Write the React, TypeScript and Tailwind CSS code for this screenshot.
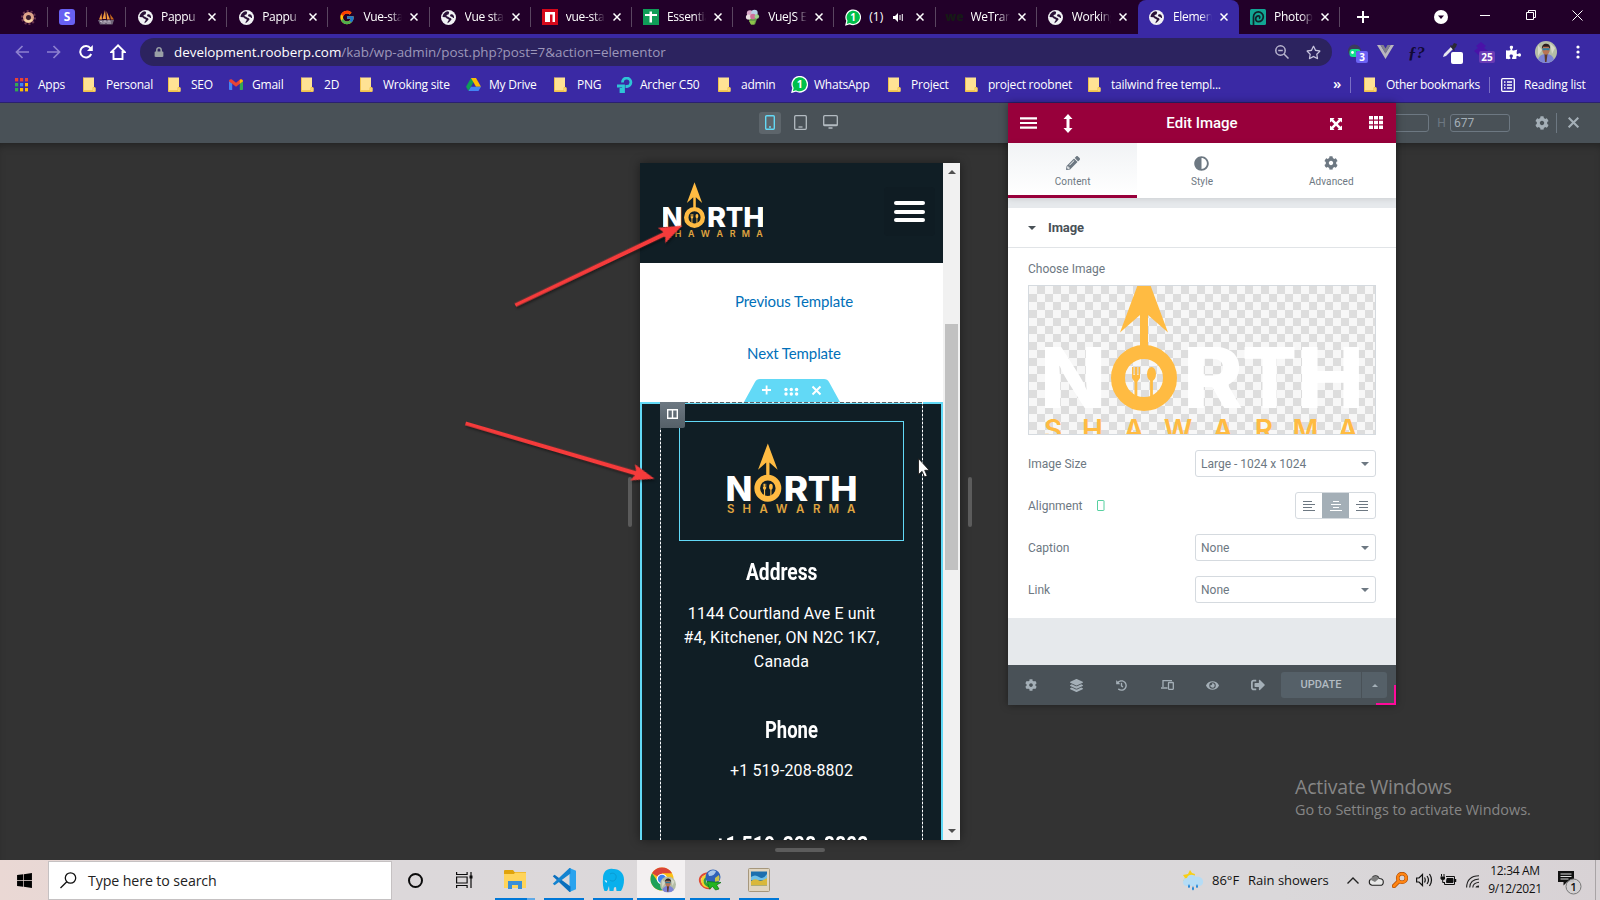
import type { ReactNode } from 'react';
import {
  FaAdjust,
  FaCog,
  FaEye,
  FaHistory,
  FaLayerGroup,
  FaLock,
  FaPencilAlt,
  FaPuzzlePiece,
  FaRegStar,
  FaSignOutAlt,
  FaWindows,
} from 'react-icons/fa';
import { FcGoogle } from 'react-icons/fc';

/* ---------- favicons and small browser icons ---------- */

function Globe() {
  return (
    <svg width="15" height="15" viewBox="0 0 15 15">
      <circle cx="7.5" cy="7.5" r="7.5" fill="#f1f1f4" />
      <path d="M7 1.2C4 1.5 1.6 4 1.6 7l2.6.3c1 .2 1.2 1.2 2.2 1.4 1 .2 1.6.6 1.3 1.5-.3.8-1.1 1-1.2 2.6l.3.5c.5-.9 1.7-1.200 2.200-2 .4-.8 1.600-1 1.500-2C10.400 8 8.800 8 7.800 7.200 7 6.500 5.600 6.400 5.500 5.700c0-.8 1.100-.8 1.800-1.100.7-.3.300-1 .7-1.500.3-.4.2-1.200-1-1.900z" fill="#2a1138" />
      <path d="M10 4.300c.8-.4 1.700 0 2.300.6.6 1 .9 2 .7 3.100-.9.200-1.200-.6-1.800-1-.8-.5-2-.3-2.100-1.300-.1-.7.300-1.100.9-1.400z" fill="#2a1138" />
    </svg>
  );
}

function Donut() {
  return (
    <svg width="15" height="15" viewBox="0 0 15 15">
      <circle cx="7.500" cy="7.500" r="6.500" fill="none" stroke="#6b3550" strokeWidth="2" strokeDasharray="2 2" />
      <circle cx="7.500" cy="7.500" r="4" fill="#3a2030" stroke="#dfa58a" strokeWidth="3" />
      <path d="M4 9.500a4.100 4.100 0 0 0 7 0" fill="none" stroke="#f6d8a8" strokeWidth="2" />
    </svg>
  );
}

function Boat() {
  return (
    <svg width="17" height="16" viewBox="0 0 17 16">
      <path d="M7 1 4.500 10H8zM3.500 4 1 10.500h3zM8.500 2 9 10.500h3z" fill="#f39a3d" />
      <path d="M12 5l.8 5.500H16z" fill="#c96a1c" />
      <path d="M0 11h16l-1.500 4.500H2z" fill="#6f6478" />
      <path d="M2 12.500h2v2M6 15v-3h2v2M10 15v-3h2v3" stroke="#d4ccd8" fill="none" strokeWidth=".8" />
    </svg>
  );
}

function WaBubble() {
  return (
    <svg width="17" height="17" viewBox="0 0 17 17" fontFamily="Open Sans, sans-serif">
      <path d="M1 16.200 2 12A7.700 7.700 0 1 1 5 15z" fill="#00c04b" stroke="#fff" strokeWidth="1.300" />
      <text x="8.700" y="12.300" textAnchor="middle" fontSize="10.500" fontWeight="700" fill="#fff">1</text>
    </svg>
  );
}

function Npm() {
  return (
    <svg width="16" height="16" viewBox="0 0 16 16">
      <path fill="#d5081b" d="M0 0h16v16H0z" />
      <path fill="#fff" d="M3 3h10v10h-2.500V5.500H8V13H3z" />
    </svg>
  );
}

function Sheet() {
  return (
    <svg width="16" height="16" viewBox="0 0 16 16">
      <path fill="#0f9d58" d="M0 0h16v16H0z" />
      <path fill="#fff" d="M2 5h4.500V2.500H9V5h5v2H9v6.500H6.500V7H2z" />
    </svg>
  );
}

function Bouquet() {
  return (
    <svg width="15" height="16" viewBox="0 0 15 16">
      <path d="M2 7h11l-3 8.500H6z" fill="#6ba04b" />
      <circle cx="5" cy="4.500" r="3.200" fill="#d8a7c8" />
      <circle cx="9.500" cy="4" r="3.200" fill="#b9cfe8" />
      <circle cx="3.500" cy="8" r="2.600" fill="#e9dfe2" />
      <circle cx="8" cy="7.500" r="2.800" fill="#cf6f9a" />
      <circle cx="11.800" cy="7.500" r="2.300" fill="#9fd18b" />
      <path d="M4 12h6l-1 3.500H6z" fill="#8cc24a" />
    </svg>
  );
}

function Photopea() {
  return (
    <svg width="16" height="16" viewBox="0 0 16 16">
      <rect width="16" height="16" rx="1.500" fill="#12a594" />
      <path d="M3.500 16V8a4.900 4.900 0 1 1 4.800 4.700c-1.600 0-2.600-1.200-2.600-2.700C5.700 8 7 6.700 8.600 6.800c1.300.1 1.700 1.900.4 2.700" fill="none" stroke="#10222a" strokeWidth="1.700" />
    </svg>
  );
}

function Close({ size = 8 }: { size?: number }) {
  return (
    <svg width={size} height={size} viewBox="0 0 8 8" stroke="currentColor" strokeWidth="1.500">
      <path d="M.5.5l7 7M7.500.5l-7 7" />
    </svg>
  );
}

function Folder() {
  return (
    <svg width="13" height="15" viewBox="0 0 13 15">
      <path d="M.5.500h10.500v9.500l1.500 1v3.500H.5z" fill="#ffe294" />
      <path d="M.5.500v14h11.500v-4h-2v3.200H.5" fill="none" stroke="#f0c24c" strokeWidth="1" />
    </svg>
  );
}

function AppsGrid() {
  const c = ['#ea4335', '#ea4335', '#ea4335', '#34a853', '#4285f4', '#fbbc05', '#34a853', '#fbbc05', '#fbbc05'];
  return (
    <svg width="13" height="14" viewBox="0 0 13 14">
      {c.map((f, i) => (
        <rect key={i} x={(i % 3) * 5} y={Math.floor(i / 3) * 5} width="3.200" height="3.400" fill={f} />
      ))}
    </svg>
  );
}

function Gmail() {
  return (
    <svg width="14" height="11" viewBox="0 0 14 11">
      <path d="M0 2v8.200q0 .8.800.8H3.200V4.500z" fill="#4285f4" />
      <path d="M14 2v8.200q0 .8-.8.800H10.800V4.500z" fill="#34a853" />
      <path d="M0 2.200C0 .3 1.700-.3 3 .6L7 3.700 11 .6c1.300-.9 3-.3 3 1.600l-3.200 2.600L7 7.700 3.200 4.800z" fill="#ea4335" />
      <path d="M10.800.8C12 0 14 .3 14 2.200l-3.200 2.600z" fill="#fbbc04" />
    </svg>
  );
}

function Drive() {
  return (
    <svg width="15" height="13" viewBox="0 0 15 13">
      <path d="M5 0h2.500v4.300L2.500 13 0 8.700z" fill="#0f9d58" />
      <path d="M5 0h5l5 8.700h-5z" fill="#fbbc04" />
      <path d="M2.500 13 5 8.700h10L12.500 13z" fill="#4285f4" />
    </svg>
  );
}

function TpLink() {
  return (
    <svg width="16" height="16" viewBox="0 0 16 16" fill="none" stroke="#2ec5d6" strokeWidth="2.800">
      <path d="M0 9h6.500v6.500H4V11M5.500 5.500A4.200 4.200 0 1 1 10 9.500H8.500" />
    </svg>
  );
}

/* ---------- browser chrome ---------- */

const tabs: { icon: ReactNode; title: string; active?: boolean; sound?: boolean }[] = [
  { icon: <Globe />, title: 'Pappu |' },
  { icon: <Globe />, title: 'Pappu |' },
  { icon: <FcGoogle size={17} />, title: 'Vue-sta' },
  { icon: <Globe />, title: 'Vue sta' },
  { icon: <Npm />, title: 'vue-sta' },
  { icon: <Sheet />, title: 'Essentia' },
  { icon: <Bouquet />, title: 'VueJS E' },
  { icon: <WaBubble />, title: '(1)', sound: true },
  { icon: <span className="text-[12px] font-extrabold leading-none text-[#161a16]">we</span>, title: 'WeTran' },
  { icon: <Globe />, title: 'Working' },
  { icon: <Globe />, title: 'Elemen', active: true },
  { icon: <Photopea />, title: 'Photop' },
];

function TabStrip() {
  return (
    <div className="flex h-[34px] shrink-0 bg-[#220029] text-white">
      <div className="flex w-[126px] items-center pl-[9px]">
        <div className="flex h-5 w-[39px] items-center justify-center border-r border-[#5a4560]"><Donut /></div>
        <div className="flex h-5 w-[39px] items-center justify-center border-r border-[#5a4560]">
          <span className="flex h-4 w-4 items-center justify-center rounded-[3px] bg-[#6860f2] text-[12px] font-bold leading-none">S</span>
        </div>
        <div className="flex h-5 w-[39px] items-center justify-center border-r border-[#5a4560]"><Boat /></div>
      </div>
      {tabs.map((t, i) => (
        <div
          key={i}
          className={
            t.active
              ? 'flex w-[101.200px] items-center rounded-t-lg bg-[#3a29a4]'
              : 'flex w-[101.200px] items-center'
          }
        >
          <div
            className={
              t.active || i === 9
                ? 'flex h-5 w-full items-center border-r border-transparent pl-[11px]'
                : 'flex h-5 w-full items-center border-r border-[#5a4560] pl-[11px]'
            }
          >
            <span className="flex w-4 shrink-0 justify-center">{t.icon}</span>
            <span className={t.sound ? 'ml-2 w-[20px] overflow-hidden whitespace-nowrap text-[12px]' : 'ml-2 w-[39px] overflow-hidden whitespace-nowrap text-[12px] tracking-[-0.3px] [mask-image:linear-gradient(to_right,black_70%,transparent)]'}>
              {t.title}
            </span>
            {t.sound && (
              <svg className="ml-[4px]" width="11" height="9" viewBox="0 0 11 9" fill="#fff">
                <path d="M0 3h2l3-3v9L2 6H0zM6.500 2h1v5h-1zM8.800 1h1v7h-1z" />
              </svg>
            )}
            <span className={t.sound ? 'ml-[12px]' : 'ml-[8px]'}><Close /></span>
          </div>
        </div>
      ))}
      <div className="flex flex-1 items-center">
        <svg className="ml-[17px]" width="12" height="12" viewBox="0 0 12 12" stroke="#fff" strokeWidth="2"><path d="M6 0v12M0 6h12" /></svg>
        <svg className="ml-[65px]" width="14" height="14" viewBox="0 0 14 14"><circle cx="7" cy="7" r="7" fill="#fff" /><path d="M4 5.500h6L7 9z" fill="#220029" /></svg>
        <svg className="mb-1 ml-[32px]" width="10" height="10" viewBox="0 0 10 10"><path d="M0 5.500h10" stroke="#fff" /></svg>
        <svg className="mb-1 ml-[36px]" width="10" height="10" viewBox="0 0 10 10" fill="none" stroke="#fff"><path d="M.5 2.500h7v7h-7zM2.500 2V.5h7v7H8" /></svg>
        <svg className="mb-1 ml-[36px]" width="11" height="11" viewBox="0 0 11 11" stroke="#fff"><path d="M.5.5l10 10M10.500.5l-10 10" /></svg>
      </div>
    </div>
  );
}

function Avatar({ size }: { size: number }) {
  return (
    <svg width={size} height={size} viewBox="0 0 22 22">
      <circle cx="11" cy="11" r="11" fill="#b4bda6" />
      <path d="M3 4l4 5-4 6zM15 2l5 5-3 6z" fill="#d7d9c8" />
      <path d="M3 18.500c2-5 5-5.500 8-5.500s6 .5 8 5.500A11 11 0 0 1 3 18.500z" fill="#7c83d6" />
      <path d="M9.500 13h3l-1 8h-1.500z" fill="#5c3a2c" />
      <ellipse cx="11" cy="9" rx="3.700" ry="4.700" fill="#b87456" />
      <path d="M7 8c-.5-4 2-5.500 4.500-5.300C14.500 3 15.500 5 15 8l-1.500-2.200H8.300z" fill="#2c1c1c" />
      <path d="M7.500 7.300h7v2h-2.800L11 8.500l-.8.800H7.500z" fill="#2c7ea0" />
    </svg>
  );
}

function AddressRow() {
  return (
    <div className="flex h-9 shrink-0 items-center bg-[#3a29a4] pt-0">
      <svg className="ml-[15px]" width="14" height="14" viewBox="0 0 14 14" fill="none" stroke="#8d80cf" strokeWidth="1.700"><path d="M14 7H1.500M7.500 1l-6 6 6 6" /></svg>
      <svg className="ml-[18px]" width="14" height="14" viewBox="0 0 14 14" fill="none" stroke="#8d80cf" strokeWidth="1.700"><path d="M0 7h12.500M6.500 1l6 6-6 6" /></svg>
      <svg className="ml-[18px]" width="14" height="14" viewBox="0 0 14 14" fill="none" stroke="#fff" strokeWidth="2"><path d="M12.200 9A5.700 5.700 0 1 1 11.500 3.300" /><path d="M13.800 0v6H8z" fill="#fff" stroke="none" /></svg>
      <svg className="ml-[17px]" width="16" height="16" viewBox="0 0 16 16" fill="none" stroke="#fff" strokeWidth="1.900"><path d="M8 1.300 1.300 8H3.500v7h9V8h2.200z" /></svg>
      <div className="ml-[14px] flex h-7 w-[1192px] shrink-0 items-center rounded-full bg-[#2c235f] pl-[14px] pr-[11px]">
        <FaLock className="text-[#9aa0a6]" size={10} />
        <span className="ml-[10px] pt-px text-[13.400px] text-white">
          development.rooberp.com<span className="text-[#9c97ba]">/kab/wp-admin/post.php?post=7&amp;action=elementor</span>
        </span>
        <svg className="ml-auto" width="14" height="14" viewBox="0 0 14 14" fill="none" stroke="#b9b5cf" strokeWidth="1.500"><circle cx="5.500" cy="5.500" r="4.700" /><path d="M9 9l4.500 4.500M3.200 5.500h4.600" /></svg>
        <FaRegStar className="ml-[17px] text-[#c8c4de]" size={15} />
      </div>
      <div className="flex flex-1 items-center">
        <div className="relative ml-[15px] h-5 w-5 shrink-0">
          <svg width="16" height="18" viewBox="0 0 16 18"><circle cx="7.500" cy="9" r="6.500" fill="#3b3b5c" /><rect x="2.500" y="7" width="11" height="8" rx="3" fill="#10e08e" /><circle cx="5.500" cy="10.500" r="1.400" fill="#fff" /><path d="M9 10h4" stroke="#3b3b5c" /></svg>
          <span className="absolute left-[9px] top-[9px] flex h-3 w-3 items-center justify-center rounded-[2px] bg-[#6b62f4] text-[10px] font-bold leading-none text-white">3</span>
        </div>
        <svg className="ml-[10px] shrink-0" width="17" height="14" viewBox="0 0 17 14"><path d="M0 0h3.500L8.500 8.500 13.500 0H17L8.500 14z" fill="#b9b7bd" /><path d="M3.500 0h3l2 3.500 2-3.500h3l-5 8.500z" fill="#80808c" /></svg>
        <span className="ml-[14px] w-[19px] shrink-0 whitespace-nowrap font-['Liberation_Serif',serif] text-[17px] font-bold italic leading-none text-[#120a35]">ƒ?</span>
        <div className="relative ml-[15px] h-5 w-[22px] shrink-0">
          <svg width="16" height="16" viewBox="0 0 16 16"><path d="M1 15l1-3 7-7 2 2-7 7z" fill="#e8e8ee" /><path d="M8 4l1-1 1 1 2-3 3 1-1 3-2 2 1 1-1 1z" fill="#2b2b33" /></svg>
          <span className="absolute left-[9px] top-[10px] h-3 w-3 rounded-[2px] bg-white" />
        </div>
        <div className="relative ml-[9px] h-5 w-[24px] shrink-0">
          <svg width="16" height="16" viewBox="0 0 16 16"><path d="M8 0l5 4-2 2 4 3-7 6-7-6 4-3-2-2z" fill="#4a12a8" /></svg>
          <span className="absolute left-[6px] top-[9px] flex h-3 w-4 items-center justify-center rounded-[2px] bg-[#6a3bb5] text-[10px] font-bold leading-none text-white">25</span>
        </div>
        <FaPuzzlePiece className="ml-[9px] shrink-0 text-white" size={15} />
        <span className="ml-[14px] shrink-0"><Avatar size={22} /></span>
        <svg className="ml-[19px] shrink-0" width="4" height="14" viewBox="0 0 4 14" fill="#fff"><circle cx="2" cy="2" r="1.600" /><circle cx="2" cy="7" r="1.600" /><circle cx="2" cy="12" r="1.600" /></svg>
      </div>
    </div>
  );
}

const bookmarks: { icon: ReactNode; label: string; w: string }[] = [
  { icon: <AppsGrid />, label: 'Apps', w: 'w-[68px]' },
  { icon: <Folder />, label: 'Personal', w: 'w-[85px]' },
  { icon: <Folder />, label: 'SEO', w: 'w-[61px]' },
  { icon: <Gmail />, label: 'Gmail', w: 'w-[72px]' },
  { icon: <Folder />, label: '2D', w: 'w-[59px]' },
  { icon: <Folder />, label: 'Wroking site', w: 'w-[106px]' },
  { icon: <Drive />, label: 'My Drive', w: 'w-[88px]' },
  { icon: <Folder />, label: 'PNG', w: 'w-[63px]' },
  { icon: <TpLink />, label: 'Archer C50', w: 'w-[101px]' },
  { icon: <Folder />, label: 'admin', w: 'w-[73px]' },
  { icon: <WaBubble />, label: 'WhatsApp', w: 'w-[97px]' },
  { icon: <Folder />, label: 'Project', w: 'w-[77px]' },
  { icon: <Folder />, label: 'project roobnet', w: 'w-[123px]' },
  { icon: <Folder />, label: 'tailwind free templ...', w: 'w-[245px]' },
];

function BookmarkBar() {
  return (
    <div className="flex h-[33px] shrink-0 items-center border-b border-[#2a2070] bg-[#3a29a4] pb-[3px] pl-[15px] text-[12px] tracking-[-0.220px] text-white">
      {bookmarks.map((b) => (
        <div key={b.label} className={`flex shrink-0 items-center ${b.w}`}>
          <span className="flex w-[23px] shrink-0">{b.icon}</span>
          <span className="whitespace-nowrap">{b.label}</span>
        </div>
      ))}
      <span className="w-[17px] pb-[3px] text-[15px] font-semibold leading-none">»</span>
      <span className="h-4 w-px bg-[#7a6fc4]" />
      <span className="ml-[13px] flex w-[22px]"><Folder /></span>
      <span className="w-[103px] whitespace-nowrap tracking-[-0.300px]">Other bookmarks</span>
      <span className="h-4 w-px bg-[#7a6fc4]" />
      <svg className="ml-[11px] mr-[9px]" width="14" height="14" viewBox="0 0 14 14" fill="none" stroke="#fff" strokeWidth="1.300"><rect x=".7" y=".7" width="12.600" height="12.600" rx="1" /><path d="M3 4h1.500M3 7h1.500M3 10h1.500M6 4h5M6 7h5M6 10h5" /></svg>
      <span className="whitespace-nowrap">Reading list</span>
    </div>
  );
}

/* ---------- North Shawarma logo ---------- */

function Logo({ className, slim = false }: { className: string; slim?: boolean }) {
  const letters = { fontFamily: 'Inter, sans-serif', fontWeight: 800, fontSize: 84, fill: '#fff', lengthAdjust: 'spacingAndGlyphs' as const };
  return (
    <svg className={className} viewBox="0 -80 314 174">
      <text {...letters} x="-5" y="61" textLength="66">N</text>
      <text {...letters} x="138" y="61" textLength="60">R</text>
      <text {...letters} x="197" y="61" textLength="55">T</text>
      <text {...letters} x="252" y="61" textLength="67">H</text>
      <path d="M99-79 123-14.500 103-32V2h-8v-34L75-14.500z" fill="#ffbb42" />
      <circle cx="99" cy="31" r="26" fill="none" stroke="#ffbb42" strokeWidth="14" />
      <path d="M87 20h1.500v8h1.200v-8h2.600v8h1.200v-8H95v11l-2.700 4V50h-2.800V35L87 31z" fill="#ffbb42" />
      <ellipse cx="106.500" cy="27" rx="4.500" ry="7" fill="#ffbb42" />
      <path d="M105.100 33h2.800v17h-2.800z" fill="#ffbb42" />
      <text
        x="8 47.500 89 133 178 219 260.500 303"
        y={slim ? 92 : 93}
        textAnchor="middle"
        fontFamily="Inter, sans-serif"
        fontWeight={600}
        fontSize={28}
        fill={slim ? '#e0a640' : '#ffbb42'}
      >
        SHAWARMA
      </text>
    </svg>
  );
}

/* ---------- editor ---------- */

function ResponsiveBar() {
  return (
    <div className="flex h-10 shrink-0 items-center bg-[#495157]">
      <div className="mb-px ml-[759px] flex h-[22px] w-[22px] items-center justify-center rounded-[3px] bg-[#5d656b]">
        <svg width="10" height="15" viewBox="0 0 10 15" fill="none" stroke="#64d8f5" strokeWidth="1.400"><rect x=".7" y=".7" width="8.600" height="13.600" rx="1" /><path d="M4 12h2" /></svg>
      </div>
      <svg className="mb-[2px] ml-[13px]" width="13" height="15" viewBox="0 0 13 15" fill="none" stroke="#b3bbc1" strokeWidth="1.300"><rect x=".7" y=".7" width="11.600" height="13.600" rx="1" /><path d="M4.500 12h4" /></svg>
      <svg className="mb-[2px] ml-[16px]" width="15" height="14" viewBox="0 0 15 14" fill="none" stroke="#b3bbc1" strokeWidth="1.300"><rect x=".7" y=".7" width="13.600" height="10" rx="1" /><path d="M1 9.800h13M5.500 13h4" /></svg>
      <div className="mb-px ml-auto flex items-center text-[12px] text-[#a4afb7]">
        <div className="h-[18px] w-[60px] rounded-[3px] border border-[#6d7882]" />
        <span className="ml-[6px] w-[13px] text-center font-['Roboto'] text-[#6d7882]">H</span>
        <div className="ml-[2px] flex h-[18px] w-[60px] items-center rounded-[3px] border border-[#6d7882] pl-[3px] font-['Roboto']">677</div>
        <FaCog className="ml-[25px]" size={14} />
        <span className="ml-[7px] h-5 w-px bg-[#6d7882]" />
        <span className="ml-[11px] mr-[21px]"><Close size={11} /></span>
      </div>
    </div>
  );
}

function Preview() {
  return (
    <div className="flex h-[677px] w-80 shadow-[0_0_10px_rgba(0,0,0,0.45)]">
      <div className="flex w-[303px] flex-col overflow-hidden bg-white">
        <div className="flex h-[100px] shrink-0 justify-between bg-[#101e25]">
          <Logo slim className="ml-[22.500px] mt-[18.500px] h-[55.500px] w-[100px]" />
          <div className="mr-2 mt-6 flex h-[49px] w-[51px] flex-col items-center justify-center gap-[4.500px] rounded bg-[#0f1c23]">
            <span className="h-1 w-[31px] rounded-full bg-white" />
            <span className="h-1 w-[31px] rounded-full bg-white" />
            <span className="h-1 w-[31px] rounded-full bg-white" />
          </div>
        </div>
        <div className="relative flex h-[139px] shrink-0 flex-col items-center pl-[5px] pt-[26px] font-['Lato',sans-serif] text-[15px] tracking-[-0.1px] text-[#0170b9]">
          <span className="h-[52px] leading-[25px]">Previous Template</span>
          <span className="leading-[25px]">Next Template</span>
          <svg className="absolute left-[104px] top-[116px]" width="97" height="23" viewBox="0 0 97 23">
            <path d="M0 23 11 3q1.500-3 5-3h64q3.500 0 5 3l11 20z" fill="#62d9f6" />
            <g fill="#fff">
              <path d="M21.700 6.500h1.800v3.600h3.500v1.800h-3.500v3.600h-1.800v-3.600H18v-1.800h3.700z" />
              <circle cx="42" cy="10.500" r="1.700" /><circle cx="47.300" cy="10.500" r="1.700" /><circle cx="52.600" cy="10.500" r="1.700" />
              <circle cx="42" cy="15" r="1.700" /><circle cx="47.300" cy="15" r="1.700" /><circle cx="52.600" cy="15" r="1.700" />
            </g>
            <path d="M68.500 7.500l8 8M76.500 7.500l-8 8" stroke="#fff" strokeWidth="2" />
          </svg>
        </div>
        <div className="relative flex h-[460px] shrink-0 justify-center border-2 border-[#62d9f6] bg-[#101e25]">
          <svg className="absolute left-[17px] top-[-2px]" width="265" height="440" viewBox="0 0 265 440" fill="none">
            <path d="M1 .5h263" stroke="#e8e8e8" /><path d="M1 .5h263" stroke="#5c6368" strokeDasharray="4 2" />
            <path d="M1.500 0v440M263.500 0v440" stroke="#5c6a72" /><path d="M1.500 0v440M263.500 0v440" stroke="#fff" strokeDasharray="2 2" />
          </svg>
          <div className="absolute left-[18px] top-[-2px] flex h-[26px] w-[25px] items-center justify-center rounded-br-[2px] bg-linear-to-b from-[#6d7882] to-[#556068]">
            <svg className="mb-[2px]" width="11" height="10" viewBox="0 0 11 10" fill="none" stroke="#fff" strokeWidth="1.400"><path d="M.7.700h9.600v8.600H.7zM5.500 1v8" /></svg>
          </div>
          <div className="mt-[17px] flex w-[225px] flex-col items-center text-center text-white">
            <div className="ml-[-1px] flex h-[120px] w-[225px] shrink-0 items-start justify-center border border-[#62d9f6]">
              <Logo slim className="mt-[21px] h-[71px] w-[129px] shrink-0" />
            </div>
            <h2 className="ml-[-20px] mt-[15px] h-8 shrink-0 scale-x-[0.8] font-['Roboto'] text-[24px] font-bold leading-8">Address</h2>
            <p className="ml-[-20px] mt-[14px] w-[206px] shrink-0 whitespace-nowrap font-['Roboto'] text-[16px] leading-6 tracking-[0.150px]">
              1144 Courtland Ave E unit<br />#4, Kitchener, ON N2C 1K7,<br />Canada
            </p>
            <h2 className="mt-[40px] h-8 shrink-0 scale-x-[0.77] font-['Roboto'] text-[24px] font-bold leading-8">Phone</h2>
            <p className="mt-[13px] shrink-0 font-['Roboto'] text-[16px] leading-6 tracking-[0.150px]">+1 519-208-8802</p>
            <h2 className="mt-[46px] h-8 shrink-0 scale-x-[0.81] whitespace-nowrap font-['Roboto'] text-[24px] font-bold leading-8">+1 519-208-8802</h2>
          </div>
        </div>
      </div>
      <div className="flex w-[17px] flex-col items-center bg-[#f1f1f1]">
        <svg className="mt-[7px] shrink-0" width="8" height="4" viewBox="0 0 8 4" fill="#505050"><path d="M0 4l4-4 4 4z" /></svg>
        <div className="mt-[150px] h-[246px] w-[13px] shrink-0 bg-[#c1c1c1]" />
        <svg className="mb-[7px] mt-auto shrink-0" width="8" height="4" viewBox="0 0 8 4" fill="#505050"><path d="M0 0l4 4 4-4z" /></svg>
      </div>
    </div>
  );
}

function Select({ label, value }: { label: string; value: string }) {
  return (
    <div className="flex h-[27px] items-center justify-between">
      <span>{label}</span>
      <div className="flex h-[27px] w-[181px] items-center justify-between rounded-[3px] border border-[#d5dadf] pl-[5px] pr-[6px]">
        <span>{value}</span>
        <svg width="8" height="4" viewBox="0 0 8 4" fill="#6d7882"><path d="M0 0l4 4 4-4z" /></svg>
      </div>
    </div>
  );
}

function AlignIcon({ d }: { d: string }) {
  return (
    <svg width="12" height="10" viewBox="0 0 12 10" fill="none" stroke="currentColor" strokeWidth="1.100">
      <path d={d} />
    </svg>
  );
}

function Panel() {
  return (
    <div className="absolute left-[1008px] top-0 flex h-[602px] w-[388px] flex-col bg-[#e6e9ec] font-['Roboto'] text-[12px] text-[#6d7882] shadow-[0_0_8px_rgba(0,0,0,0.4)]">
      <div className="flex h-10 shrink-0 items-center bg-[#98003b] text-white">
        <svg className="ml-[12px]" width="17" height="12" viewBox="0 0 17 12" fill="#fff"><path d="M0 .3h17v2.200H0zM0 4.900h17v2.200H0zM0 9.500h17v2.200H0z" /></svg>
        <svg className="ml-[26px]" width="10" height="19" viewBox="0 0 10 19" fill="#fff"><path d="M5 0l4.500 5H6.500v9h3L5 19 .5 14h3V5h-3z" /></svg>
        <span className="ml-[34px] w-[190px] text-center text-[15px] font-medium">Edit Image</span>
        <svg className="ml-[33px] mt-[2px]" width="12" height="12" viewBox="0 0 12 12" fill="#fff"><path d="M0 0h4.500L3.300 1.500 6 4.200l2.700-2.700L7.500 0H12v4.500l-1.500-1.200L7.800 6l2.700 2.700L12 7.500V12H7.500l1.200-1.500L6 7.800l-2.700 2.700L4.500 12H0V7.500l1.500 1.200L4.200 6 1.500 3.300 0 4.500z" /></svg>
        <svg className="mb-px ml-[27px]" width="14" height="13" viewBox="0 0 14 13" fill="#fff"><path d="M0 0h4v3.500H0zM5 0h4v3.500H5zM10 0h4v3.500h-4zM0 4.700h4v3.500H0zM5 4.700h4v3.500H5zM10 4.700h4v3.500h-4zM0 9.500h4V13H0zM5 9.500h4V13H5zM10 9.500h4V13h-4z" /></svg>
      </div>
      <div className="z-10 grid h-[55px] shrink-0 grid-cols-3 bg-white text-[10px] tracking-[0.1px] shadow-[0_1px_6px_rgba(0,0,0,0.12)]">
        <div className="flex flex-col items-center border-b-[3px] border-[#98003b] bg-linear-to-b from-[#f1f3f5] to-white pt-[13px]">
          <FaPencilAlt size={14} /><span className="mt-[4px] leading-4">Content</span>
        </div>
        <div className="flex flex-col items-center pt-[13px]">
          <FaAdjust size={15} /><span className="mt-[3px] leading-4">Style</span>
        </div>
        <div className="flex flex-col items-center pt-[13px]">
          <FaCog size={14} /><span className="mt-[4px] leading-4">Advanced</span>
        </div>
      </div>
      <div className="mt-[10px] flex h-10 shrink-0 items-center border-b border-[#e1e4e7] bg-white pl-5 text-[13px] font-bold tracking-[-0.1px] text-[#495157]">
        <svg className="mr-[12px]" width="8" height="4" viewBox="0 0 8 4" fill="#495157"><path d="M0 0l4 4 4-4z" /></svg>
        Image
      </div>
      <div className="flex h-[370px] shrink-0 flex-col bg-white px-5 pt-[13px]">
        <span className="leading-[17px]">Choose Image</span>
        <div className="mt-[7px] h-[150px] shrink-0 overflow-hidden border border-[#d5dadf] bg-[conic-gradient(#ddd_25%,#f7f7f7_0_50%,#ddd_0_75%,#f7f7f7_0)] bg-size-[16px_16px]">
          <Logo className="ml-[16px] mt-[-19px] h-[174px] w-[314px]" />
        </div>
        <div className="mt-[15px] flex flex-col gap-[15px]">
          <Select label="Image Size" value="Large - 1024 x 1024" />
          <div className="flex h-[27px] items-center">
            <span>Alignment</span>
            <svg className="ml-[15px]" width="8" height="11" viewBox="0 0 8 11" fill="none" stroke="#58d0a0"><rect x=".5" y=".5" width="6.500" height="10" rx=".5" /></svg>
            <div className="ml-auto flex h-[27px] w-[81px] overflow-hidden rounded-[3px] border border-[#d5dadf]">
              <span className="flex flex-1 items-center justify-center"><AlignIcon d="M0 .500h9M0 3.500h12M0 6.500h9M0 9.500h12" /></span>
              <span className="my-[-1px] flex w-[27px] items-center justify-center bg-[#a4afb7] text-white"><AlignIcon d="M3 .500h6M1 3.500h10M3 6.500h6M0 9.500h12" /></span>
              <span className="flex flex-1 items-center justify-center"><AlignIcon d="M3 .500h9M0 3.500h12M3 6.500h9M0 9.500h12" /></span>
            </div>
          </div>
          <Select label="Caption" value="None" />
          <Select label="Link" value="None" />
        </div>
      </div>
      <div className="mt-auto flex h-10 shrink-0 items-center bg-[#495157] text-[#a4afb7]">
        <div className="flex w-[273px] shrink-0">
          <span className="flex w-[45.500px] items-center justify-center"><FaCog size={12} /></span>
          <span className="flex w-[45.500px] items-center justify-center"><FaLayerGroup size={13} /></span>
          <span className="flex w-[45.500px] items-center justify-center"><FaHistory size={11} /></span>
          <span className="flex w-[45.500px] items-center justify-center">
            <svg width="13" height="10" viewBox="0 0 13 10" fill="none" stroke="currentColor" strokeWidth="1.300"><path d="M2 7V.700h9M0 8h6.500" /><rect x="7.500" y="2.500" width="4.800" height="6.800" rx=".5" /></svg>
          </span>
          <span className="flex w-[45.500px] items-center justify-center"><FaEye size={13} /></span>
          <span className="flex w-[45.500px] items-center justify-center"><FaSignOutAlt size={14} /></span>
        </div>
        <div className="flex h-[26px] w-[80px] items-center justify-center rounded-l-[3px] bg-[#556068] pt-px text-[11px] font-medium text-[#b2bbc2]">UPDATE</div>
        <div className="ml-px flex h-[26px] w-[25px] items-center justify-center rounded-r-[3px] bg-[#556068]">
          <svg width="6" height="3" viewBox="0 0 8 4" fill="#a4afb7"><path d="M0 4l4-4 4 4z" /></svg>
        </div>
      </div>
      <div className="absolute bottom-0 right-0 h-5 w-5 border-b-2 border-r-2 border-[#ff0a9a]" />
    </div>
  );
}

function Annotations() {
  return (
    <svg className="pointer-events-none absolute left-0 top-0" width="1000" height="757" viewBox="0 103 1000 757">
      <g fill="#f53b3b" className="drop-shadow-[1px_2px_1px_rgba(0,0,0,0.4)]">
        <path d="M0-2.200 165-2.200 162-8.500 185 0 162 8.500 165 2.200 0 1.500z" transform="translate(515.500 305.500) rotate(-25.600)" />
        <path d="M0-2 177-2.200 174-8.500 197 0 174 8.500 177 2.200 0 1.700z" transform="translate(465.500 423.500) rotate(16.300)" />
      </g>
      <path d="M918.500 458.500v16l3.600-3.200 2.500 5.700 2.600-1.200-2.500-5.500h4.500z" fill="#fff" stroke="#111" strokeWidth=".8" />
    </svg>
  );
}

function Editor() {
  return (
    <div className="relative flex h-[757px] shrink-0 flex-col bg-[#333]">
      <ResponsiveBar />
      <div className="flex flex-1 flex-col items-center pt-5 shadow-[inset_0_6px_8px_-4px_rgba(0,0,0,0.35)]">
        <div className="flex items-center gap-2">
          <span className="mt-px h-[50px] w-1 rounded-full bg-[#5c5c5c]" />
          <Preview />
          <span className="mt-px h-[50px] w-1 rounded-full bg-[#5c5c5c]" />
        </div>
        <span className="mt-2 h-1 w-[50px] rounded-full bg-[#5c5c5c]" />
      </div>
      <Panel />
      <Annotations />
      <div className="absolute left-[1295px] top-[670px] flex flex-col whitespace-nowrap text-[#868686]">
        <span className="text-[19.500px] leading-[28px] tracking-[-0.2px]">Activate Windows</span>
        <span className="text-[14.400px] leading-[18px]">Go to Settings to activate Windows.</span>
      </div>
    </div>
  );
}

/* ---------- taskbar ---------- */

function Explorer() {
  return (
    <svg width="22" height="20" viewBox="0 0 22 20"><path d="M0 1q0-1 1-1h8l1.500 2H22v14H0z" fill="#e0a30c" /><path d="M0 4 10 4 11 2.500H22V18H0z" fill="#ffd45a" /><path d="M4 19v-8h14v8h-4v-4H8v4z" fill="#3a8fd8" /></svg>
  );
}
function VsCode() {
  return (
    <svg width="24" height="24" viewBox="0 0 24 24">
      <path d="M17.500 0 24 2.800v18.400L17.500 24z" fill="#2aa3ee" />
      <path d="M.8 8.300 2.600 6.700 18.500 18.500V24h-1z" fill="#0a6fbd" />
      <path d="M.8 15.700 2.600 17.300 18.500 5.500V0h-1z" fill="#1383d0" />
    </svg>
  );
}
function Elephant() {
  return (
    <svg width="22" height="24" viewBox="0 0 22 24"><path d="M1 10C1 4 5 0 11 1c6-.5 11 4 11 10.500 0 5-1 8-3 11.500h-4.500l-.5-4-2 .5L11.500 23h-4l-.5-5c-1 2-1 4-2 5H2.500C1 20 .5 15 1 10z" fill="#09b0ec" /><path d="M8 6c3-2 7 0 6 4-.5 3-4 4-6 2" fill="none" stroke="#0a9bd2" /><path d="M2.500 12l2.500 1-.7 2z" fill="#fff" /></svg>
  );
}
function Chrome() {
  return (
    <svg width="26" height="26" viewBox="0 0 26 26">
      <circle cx="12" cy="12" r="11.500" fill="#fbc116" />
      <path d="M12 12 2 6.300A11.500 11.500 0 0 1 22 6.300H12z" fill="#db4437" />
      <path d="M2 6.300A11.500 11.500 0 0 0 11.500 23.500L16 14.500 7.500 14z" fill="#1fa15a" />
      <circle cx="12" cy="12" r="5.300" fill="#fff" /><circle cx="12" cy="12" r="4.200" fill="#3f82ee" />
      <g transform="translate(10 9.500)"><Avatar size={16} /></g>
    </svg>
  );
}
function Idm() {
  return (
    <svg width="24" height="22" viewBox="0 0 24 22" fill="none">
      <path d="M12 4C5 4 1 8 2 12.500s6 7.500 11 6.500" stroke="#e04a35" strokeWidth="2" /><path d="M12 6C7 6 3.500 9 4.500 13s4 5 8 4.500" stroke="#f6d32b" strokeWidth="2.400" /><path d="M12 8.500c-4 0-6 2-5 5s4 4 7 3" stroke="#33a13c" strokeWidth="2.600" />
      <circle cx="15" cy="8" r="7.500" fill="#2f62b8" /><path d="M10 4q3-4 8-2-1 5-7 5z" fill="#a9c7e8" /><path d="M17 9l4-3q1 3 0 6l-4 1z" fill="#c9c24a" /><path d="M9 12.500l14 1-4.500 2.500 2.500 4-3.500 1-3-3.500-3 2.500z" fill="#22b520" stroke="#0b6e12" strokeWidth=".7" />
    </svg>
  );
}
function Photo() {
  return (
    <svg width="22" height="24" viewBox="0 0 22 24"><rect x=".5" y=".5" width="21" height="23" rx="1" fill="#e0d5c0" stroke="#a6977c" /><path d="M3 3.500h16v14H3z" fill="#1c6fae" /><path d="M3 9q4-3 8 0t8-3v6H3z" fill="#6fc0e8" /><path d="M3 13q4-3 7-1t9-2v7.500H3z" fill="#d9b83a" /></svg>
  );
}

function TaskApp({ children, bar, active = false, extra = false }: { children: ReactNode; bar: string; active?: boolean; extra?: boolean }) {
  return (
    <div className={active ? 'flex h-10 w-12 flex-col items-center bg-[#f3f0f1]' : 'flex h-10 w-[49px] flex-col items-center'}>
      <div className="flex h-[38px] items-center pt-[2px]">{children}</div>
      <div className={`flex h-[2px] justify-end bg-[#0078d7] ${bar}`}>{extra && <span className="w-2 bg-[#5fa9e6]" />}</div>
    </div>
  );
}

function Taskbar() {
  return (
    <div className="flex h-10 shrink-0 items-center bg-[linear-gradient(to_right,#ead8d4,#dcd8da_25%,#dad8da_80%,#d8d2d5)] text-[#111]">
      <span className="flex w-12 justify-center"><FaWindows size={17} className="text-black" /></span>
      <div className="flex h-[39px] w-[344px] items-center border border-[#c5c1c2] bg-white pl-[11px]">
        <svg width="17" height="17" viewBox="0 0 17 17" fill="none" stroke="#111" strokeWidth="1.300"><circle cx="10.500" cy="6" r="5.200" /><path d="M6.800 9.700.5 16" /></svg>
        <span className="ml-[11px] pt-px text-[14.200px] tracking-[-0.1px] text-[#222]">Type here to search</span>
      </div>
      <svg className="ml-[16px]" width="15" height="15" viewBox="0 0 15 15" fill="none" stroke="#0c0c0c" strokeWidth="2"><circle cx="7.500" cy="7.500" r="6.500" /></svg>
      <svg className="ml-[33px]" width="17" height="16" viewBox="0 0 17 16" fill="none" stroke="#0c0c0c" strokeWidth="1.200"><path d="M.6 0v2.500h10.500V0M.6 16v-2.500h10.500V16M.6 5h10.500v6H.6zM15 0v16" /><path d="M13.500 3.500h3v3h-3z" fill="#0c0c0c" stroke="none" /></svg>
      <div className="ml-[17px] flex">
        <TaskApp bar="w-10" extra><Explorer /></TaskApp>
        <TaskApp bar="w-10"><VsCode /></TaskApp>
        <TaskApp bar="w-10"><Elephant /></TaskApp>
        <TaskApp bar="w-12" active><span className="ml-[3px]"><Chrome /></span></TaskApp>
        <TaskApp bar="w-10"><Idm /></TaskApp>
        <TaskApp bar="w-10"><Photo /></TaskApp>
      </div>
      <div className="ml-auto flex items-center text-[13px]">
        <svg width="22" height="21" viewBox="0 0 22 21"><path d="M8 0l2 3 3 1-1 5-7 3-4-1 2-3-2-3 5-1z" fill="#f8cf17" /><path d="M5 16a4 4 0 0 1 0-8c1-4 7-4 9-1 4-1 8 2 7 6-.5 2-2 3-4 3z" fill="#b5dcf5" /><path d="M7 14q2 3 0 4-2-1 0-4zM15 14q2 3 0 4-2-1 0-4zM11 16q2 3 0 4.500-2-1.500 0-4.500z" fill="#1f86d8" /></svg>
        <span className="ml-[8px] w-[36px] whitespace-nowrap pt-px">86°F</span>
        <span className="w-[99px] whitespace-nowrap pt-px">Rain showers</span>
        <svg width="12" height="7" viewBox="0 0 12 7" fill="none" stroke="#222" strokeWidth="1.400"><path d="M.5 6.500 6 1l5.500 5.500" /></svg>
        <svg className="ml-[9px]" width="16" height="11" viewBox="0 0 16 11"><path d="M4 10.300a3.300 3.300 0 0 1 0-6.500C5 0 10 0 11 3.500c3 0 4.300 1.700 4.300 3.400 0 2-1.300 3.400-3.300 3.400z" fill="#e8e8e8" stroke="#222" strokeWidth="1.100" /><path d="M2 4.500C5 0 10 0 11 3.500L7 7z" fill="#7d7d7d" /></svg>
        <svg className="ml-[8px]" width="16" height="16" viewBox="0 0 16 16" fill="none"><path d="M6 10 2 14" stroke="#a64600" strokeWidth="4.400" strokeLinecap="round" /><circle cx="10" cy="6" r="4.300" stroke="#a64600" strokeWidth="3.600" /><path d="M6 10 2 14" stroke="#ff8412" strokeWidth="3" strokeLinecap="round" /><circle cx="10" cy="6" r="4.300" stroke="#ff8412" strokeWidth="2.500" /></svg>
        <svg className="ml-[8px]" width="17" height="14" viewBox="0 0 17 14" fill="none" stroke="#111" strokeWidth="1.200"><path d="M.6 5h2.400l3.500-3.500v11L3 9H.6zM8.500 4.500q1.500 2.500 0 5M11 3q3 4 0 8M13.500 1q4 6 0 12" /></svg>
        <svg className="ml-[7px]" width="17" height="12" viewBox="0 0 17 12" fill="none" stroke="#111"><path d="M6 2.500h8.500v8H4.500V8.500" /><path d="M7 4.500h6v4H6.500z" fill="#111" /><path d="M15.500 5v3" strokeWidth="1.500" /><path d="M1.500 0v2.500M4 0v2.500" /><path d="M.5 2.500h4.500v2q0 1.500-2.200 1.500T.5 4.500z" fill="#111" stroke="none" /><path d="M2.700 6v2.500H5" /></svg>
        <svg className="ml-[9px] mt-[3px]" width="14" height="13" viewBox="0 0 14 13" fill="none" stroke="#222" strokeWidth="1.100"><path d="M.6 12.500Q1 1 13 .8M3.700 12.500Q4 4.500 13 4M6.800 12.500Q7 8 13 7.300" /><path d="M9.500 12.500q.2-2 3.500-2v2z" fill="#222" stroke="none" /></svg>
        <div className="ml-[7px] flex w-[56px] flex-col items-center whitespace-nowrap text-[12px] leading-[18px] tracking-[-0.350px]">
          <span>12:34 AM</span>
          <span>9/12/2021</span>
        </div>
        <svg className="ml-[15px] mt-[4px]" width="25" height="26" viewBox="0 0 25 26" fontFamily="Open Sans, sans-serif">
          <path d="M0 2h16v11H9l-3.500 3.500V13H0z" fill="#111" /><path d="M2.500 5h11M2.500 7.500h11M2.500 10h8" stroke="#ddd" />
          <circle cx="15.500" cy="17.500" r="7.500" fill="#d3cfd1" fillOpacity=".92" stroke="#777" />
          <text x="15.500" y="21.700" fontSize="11.500" fontWeight="600" textAnchor="middle" fill="#111">1</text>
        </svg>
        <span className="ml-[12px] mr-1 h-10 w-px bg-[#a9a4a6]" />
      </div>
    </div>
  );
}

export default function App() {
  return (
    <div className="flex h-[900px] w-[1600px] flex-col overflow-hidden font-['Open_Sans',sans-serif]">
      <TabStrip />
      <AddressRow />
      <BookmarkBar />
      <Editor />
      <Taskbar />
    </div>
  );
}
